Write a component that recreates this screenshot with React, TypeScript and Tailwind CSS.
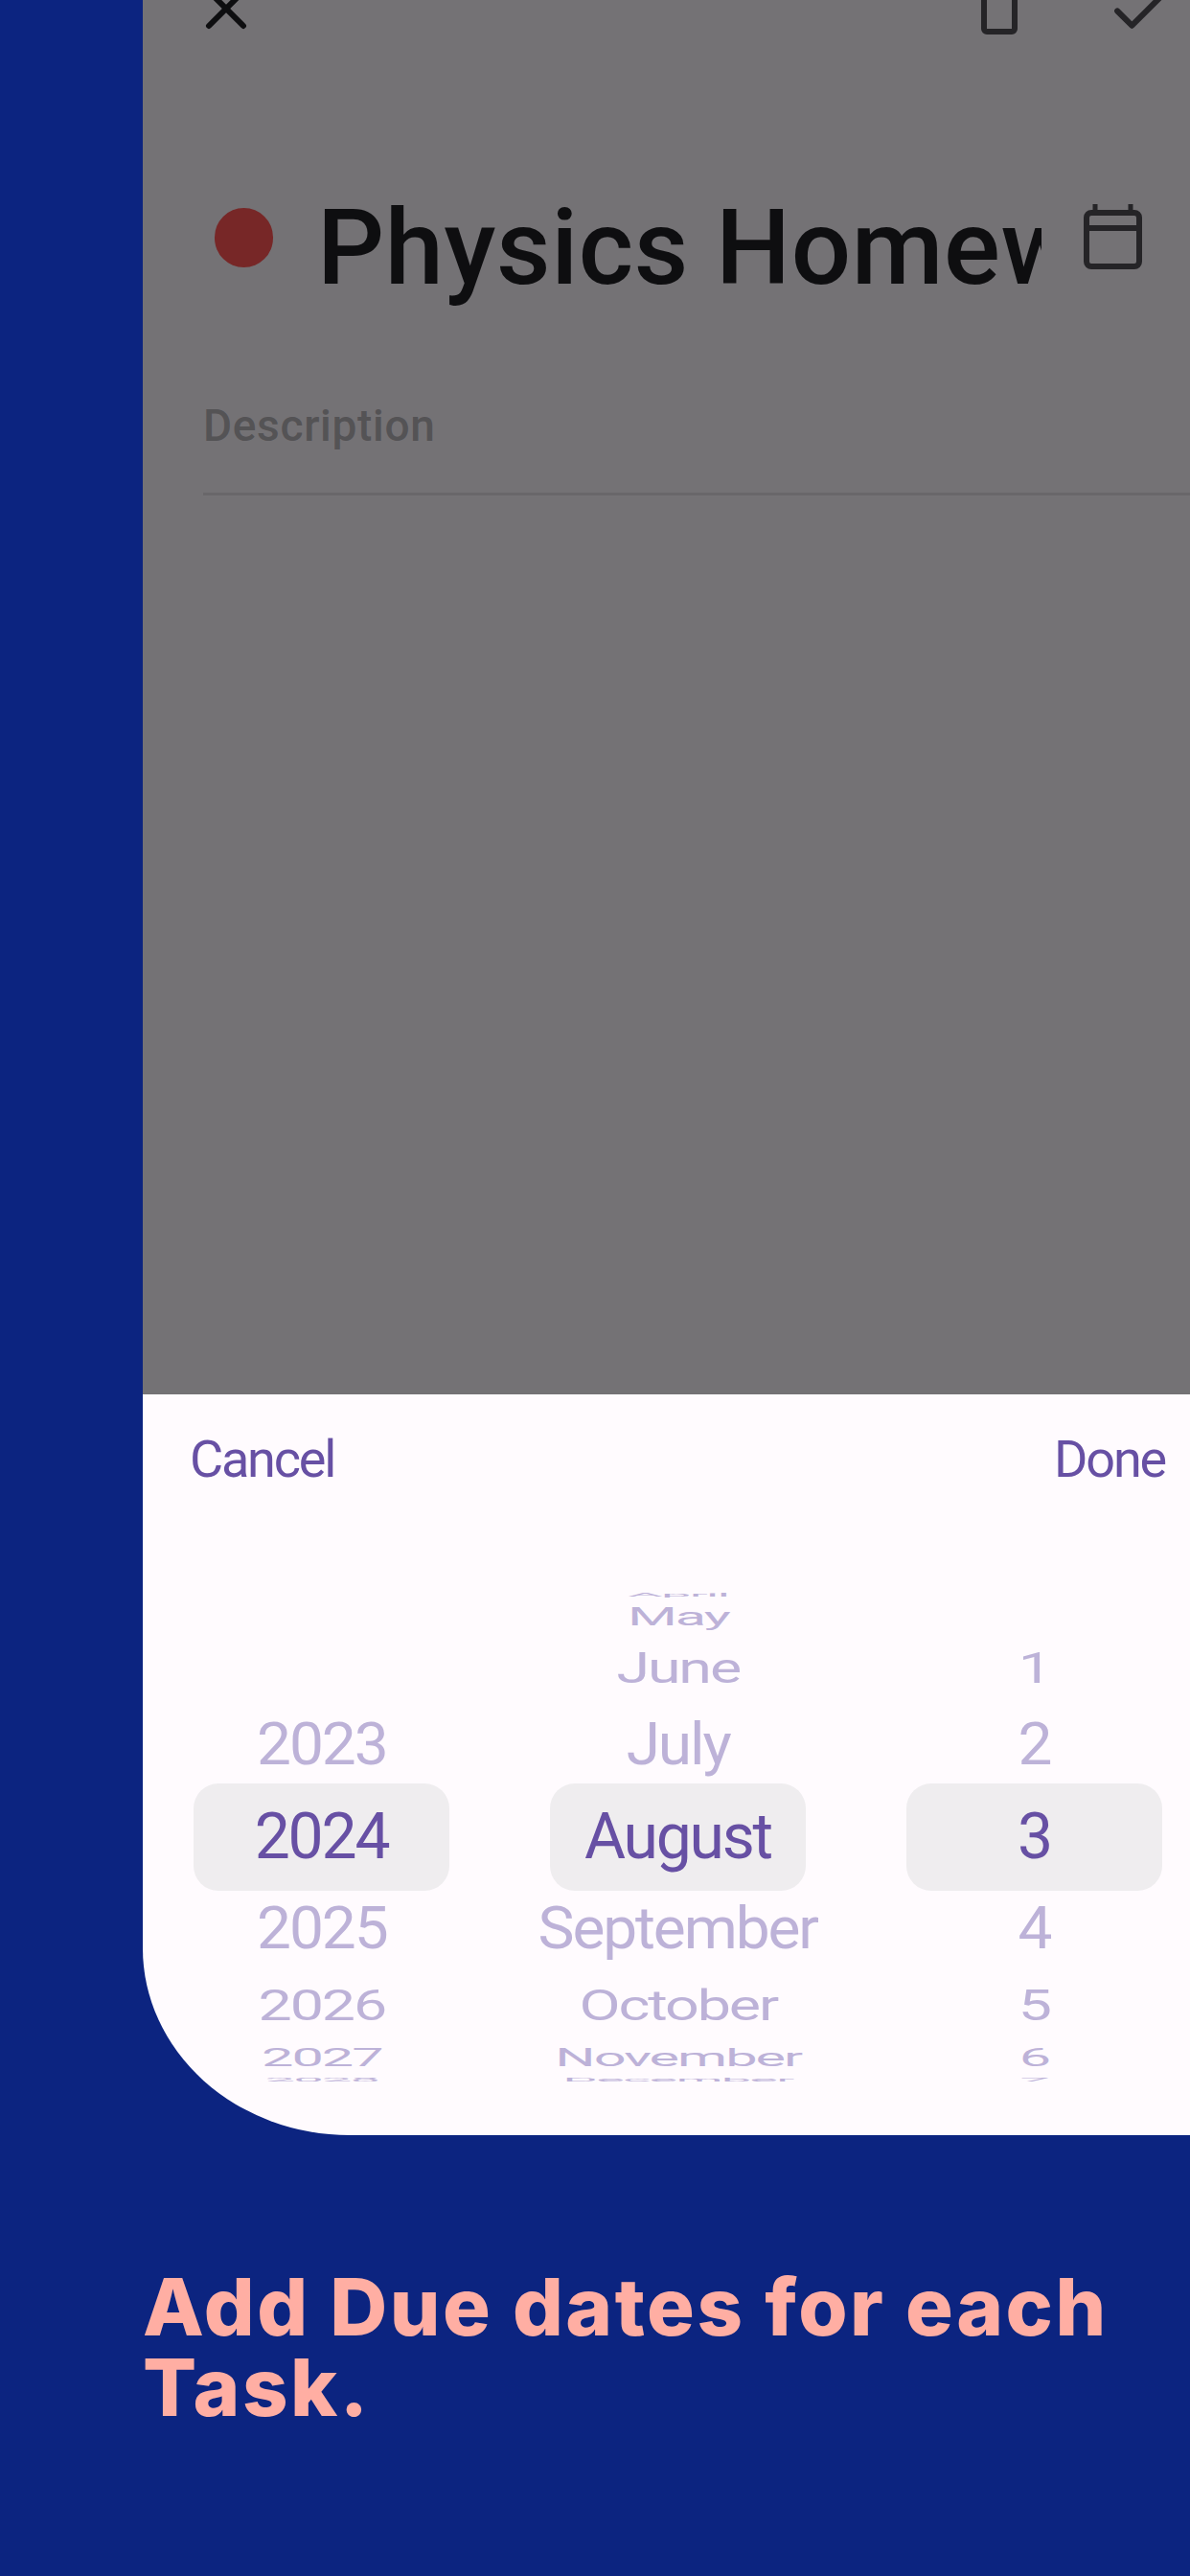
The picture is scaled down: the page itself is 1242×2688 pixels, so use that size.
import { X, Check } from 'lucide-react'

const slots = [
  { box: 'h-[18px]', text: 'scale-x-[0.85] scale-y-[0.09]' },
  { box: 'h-[28px]', text: 'scale-x-[0.9] scale-y-[0.4]' },
  { box: 'h-[80px]', text: 'scale-x-[0.95] scale-y-[0.68]' },
  { box: 'h-[80px]', text: 'scale-x-[0.97] scale-y-[0.92]' },
  { box: 'h-[112px]', text: '' },
  { box: 'h-[80px]', text: 'scale-x-[0.97] scale-y-[0.92]' },
  { box: 'h-[80px]', text: 'scale-x-[0.95] scale-y-[0.68]' },
  { box: 'h-[28px]', text: 'scale-x-[0.9] scale-y-[0.4]' },
  { box: 'h-[18px]', text: 'scale-x-[0.85] scale-y-[0.09]' },
]

const years = ['', '', '', '2023', '2024', '2025', '2026', '2027', '2028']
const months = ['April', 'May', 'June', 'July', 'August', 'September', 'October', 'November', 'December']
const days = ['', '', '1', '2', '3', '4', '5', '6', '7']

function Wheel({ items }: { items: string[] }) {
  return (
    <div className="flex w-[267px] flex-col">
      {items.map((label, i) => {
        const selected = i === 4
        return (
          <div
            key={i}
            className={`${slots[i].box} flex items-center justify-center ${selected ? 'rounded-[26px] bg-[#efedef] text-[#6750a4]' : 'text-[#bdb2d8]'}`}
          >
            <span className={`${slots[i].text} block whitespace-nowrap text-[66px] leading-[66px] tracking-[-2.2px]`}>
              {label}
            </span>
          </div>
        )
      })}
    </div>
  )
}

export default function App() {
  return (
    <div className="flex h-[2688px] w-[1242px] flex-col overflow-hidden bg-[#0c2480] pl-[149px] font-['Roboto',sans-serif]">
      <div className="flex h-[1455px] flex-col overflow-hidden bg-[#747275]">
        <div className="mt-[-26px] flex h-[72px] items-center pl-[51px]">
          <X className="mt-[-2px] h-[72px] w-[72px] text-[#0e0e10]" strokeWidth={2} />
          <div className="ml-auto mt-[-24px] h-[76px] w-[38px] shrink-0 rounded-[6px] border-[6px] border-[#252427]" />
          <Check className="ml-[92px] mr-[15px] mt-[3px] h-[73px] w-[73px] text-[#252427]" strokeWidth={2} />
        </div>
        <div className="mt-[130px] flex items-center pl-[75px]">
          <div className="mt-[-4px] h-[62px] w-[61px] rounded-full bg-[#772727]" />
          <div className="ml-[46px] w-[756px] overflow-hidden pt-[18px]">
            <div className="whitespace-nowrap text-[110px] font-medium leading-[130px] tracking-[0.6px] text-[#0e0e10]">
              Physics Homework
            </div>
          </div>
          <svg className="ml-[44px] mt-[-6px] h-[68px] w-[61px]" viewBox="0 0 61 68" fill="none" stroke="#252427" strokeWidth="6">
            <rect x="3" y="9" width="55" height="56" rx="5" />
            <path d="M3 25H58" />
            <path d="M12 0V9M49 0V9" strokeWidth="5" />
          </svg>
        </div>
        <div className="ml-[63px] mt-[95px] border-b-[3px] border-[#69676a] pb-[45px] text-[46px] font-medium leading-[50px] tracking-[0.7px] text-[#545355]">
          Description
        </div>
      </div>
      <div className="flex h-[773px] flex-col rounded-bl-[216px_195px] bg-[#fffbfe]">
        <div className="flex items-center justify-between pl-[49px] pr-[26px] pt-[36px] text-[54px] leading-[64px] tracking-[-2.2px] text-[#6750a4]">
          <span>Cancel</span>
          <span>Done</span>
        </div>
        <div className="ml-[53px] mt-[100px] flex gap-[105px]">
          <Wheel items={years} />
          <Wheel items={months} />
          <Wheel items={days} />
        </div>
      </div>
      <h1 className="mt-[137px] whitespace-pre-line font-['Inter',sans-serif] text-[83px] font-extrabold leading-[84px] tracking-[2.5px] text-[#ffaea3]">
        {'Add Due dates for each\nTask.'}
      </h1>
    </div>
  )
}
